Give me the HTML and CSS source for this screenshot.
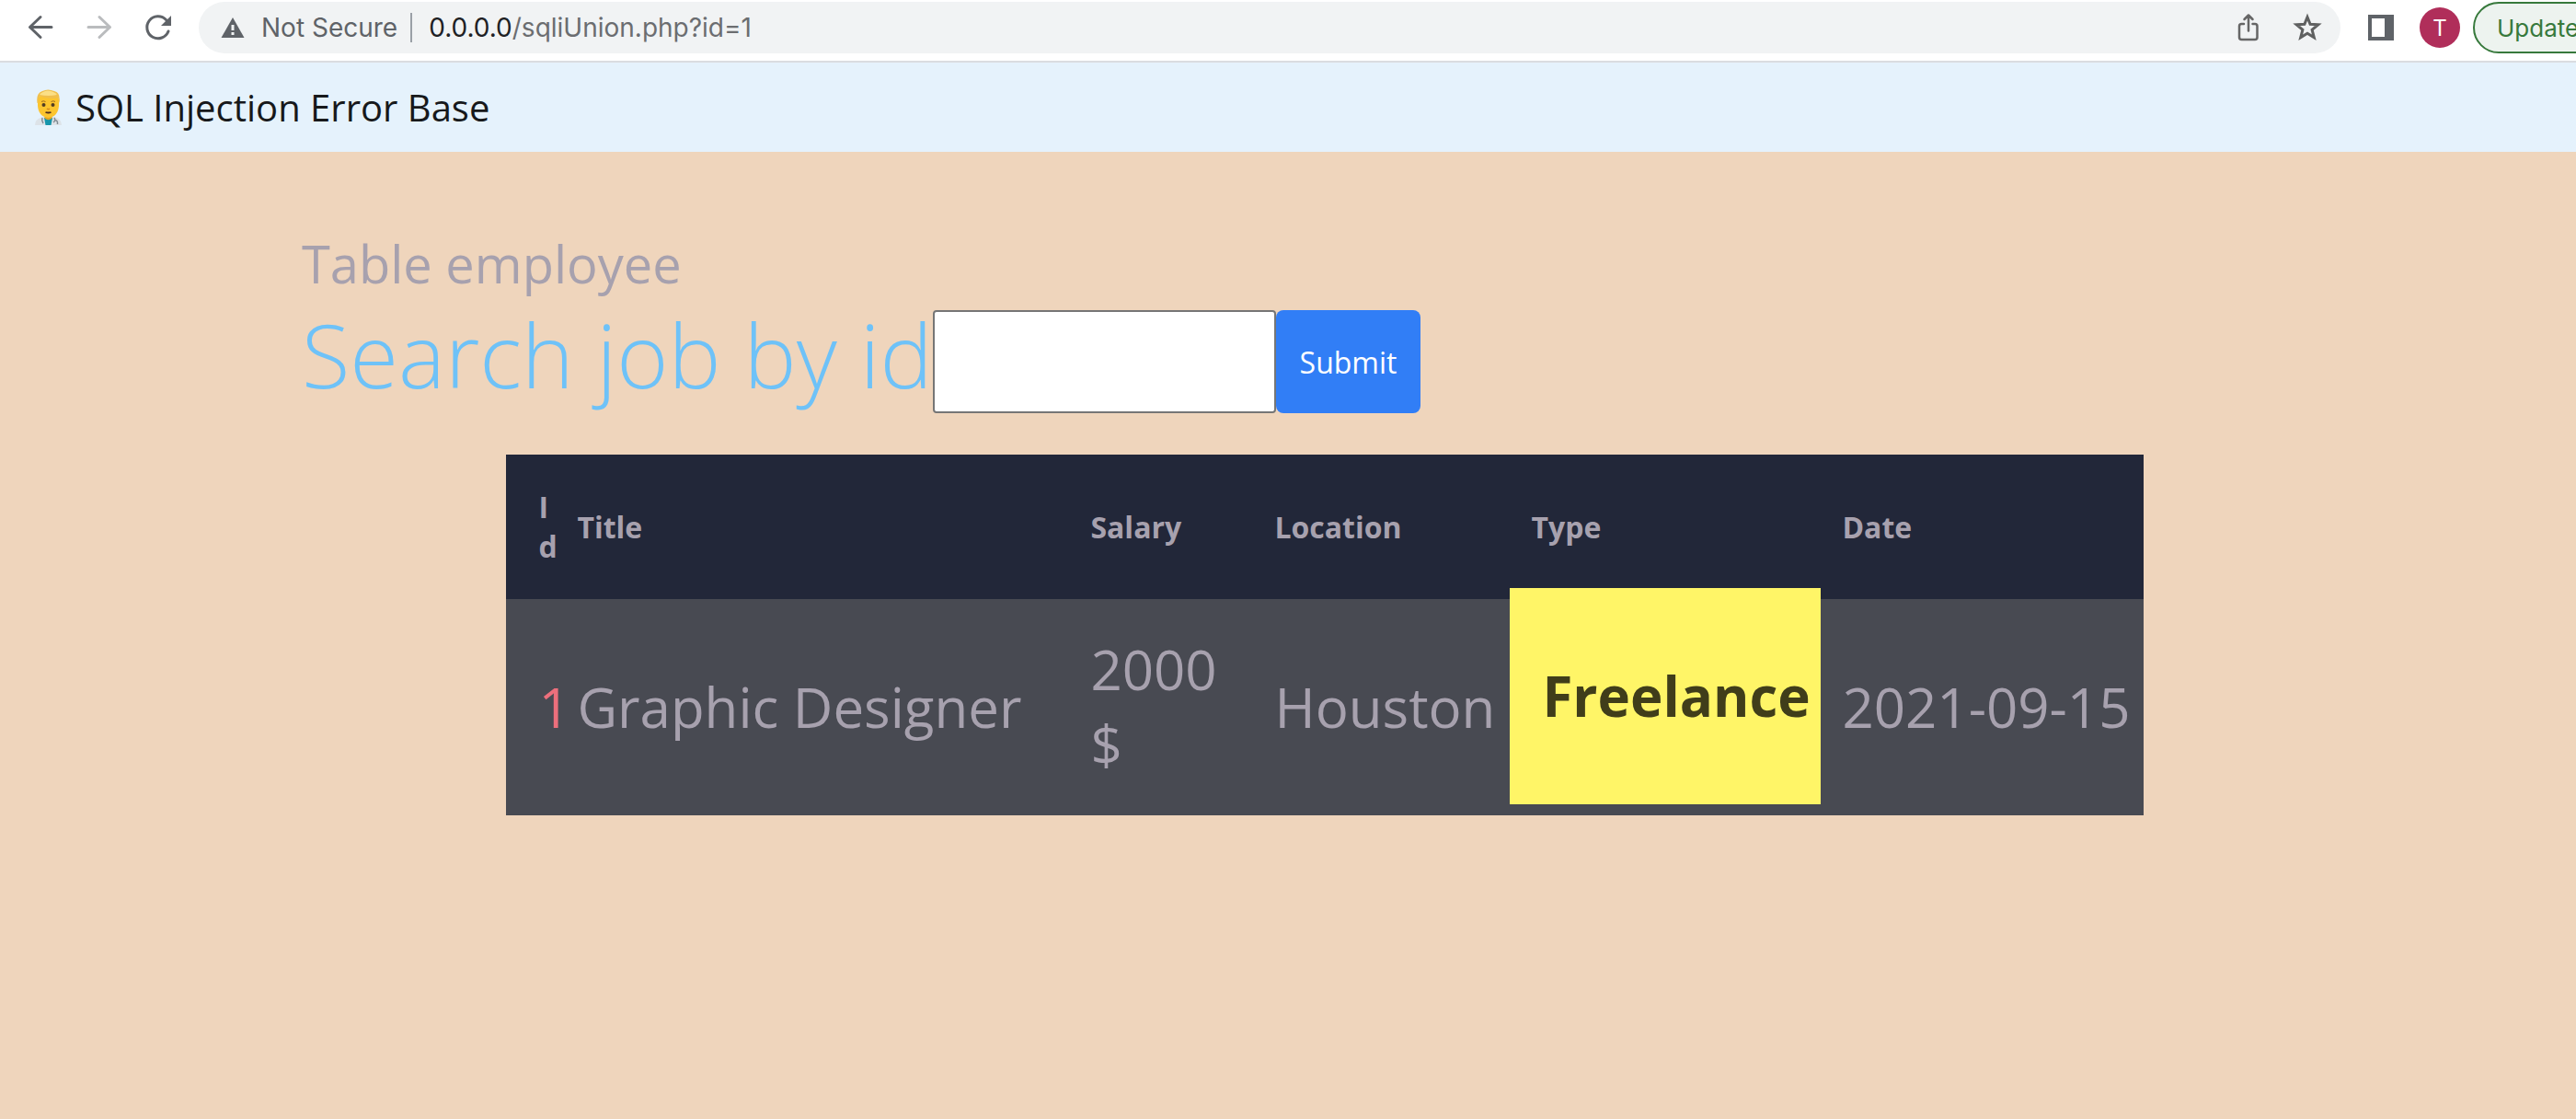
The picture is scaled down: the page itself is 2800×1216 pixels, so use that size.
FILE: index.html
```html
<!DOCTYPE html>
<html lang="en">
<head>
<meta charset="utf-8">
<title>SQL Injection Error Base</title>
<link rel="stylesheet" href="styles.css">
</head>
<body>
<div class="toolbar">
  <div class="nav-buttons">
    <button type="button" class="icon-button" aria-label="Back">
      <svg width="32" height="32" viewBox="0 0 32 32" fill="none" stroke="#5f6368" stroke-width="3" stroke-linecap="round" stroke-linejoin="round"><path d="M28 15.500H4.500M16 4.500L4.500 15.500L16 26.500"/></svg>
    </button>
    <button type="button" class="icon-button" aria-label="Forward">
      <svg width="32" height="32" viewBox="0 0 32 32" fill="none" stroke="#babcbe" stroke-width="3" stroke-linecap="round" stroke-linejoin="round"><path d="M4 15.500H27.500M16 4.500L27.500 15.500L16 26.500"/></svg>
    </button>
    <button type="button" class="icon-button" aria-label="Reload">
      <svg width="32" height="32" viewBox="0 0 32 32"><path d="M27 20A12 12 0 1 1 24.500 7.500" fill="none" stroke="#5f6368" stroke-width="3" stroke-linecap="round"/><path d="M30 3V14H19Z" fill="#5f6368"/></svg>
    </button>
  </div>
  <div class="address">
    <svg width="26" height="24" viewBox="0 0 26 24"><path d="M13 1L25.500 23H.500Z" fill="#5f6368"/><path d="M11.500 9h3v6h-3zM11.500 17h3v3h-3z" fill="#f1f3f4"/></svg>
    <span class="security">Not Secure</span>
    <span class="url" role="textbox" aria-label="Address"><span class="host">0.0.0.0</span>/sqliUnion.php?id=1</span>
    <button type="button" class="icon-button" aria-label="Share">
      <svg width="32" height="32" viewBox="0 0 32 32" fill="none" stroke="#666" stroke-width="2.500" stroke-linecap="round" stroke-linejoin="round"><path d="M11 12H8.500Q6 12 6 14.500V26.500Q6 29 8.500 29H23Q25.500 29 25.500 26.500V14.500Q25.500 12 23 12H20.500M16 19.500V3M11.500 7L16 2.500L20.500 7"/></svg>
    </button>
    <button type="button" class="icon-button" aria-label="Bookmark">
      <svg width="32" height="32" viewBox="0 0 32 32"><path d="M16 4.500L19.100 12.300L27.800 12.800L21.100 18.300L23.300 26.800L16 22.200L8.700 26.800L10.900 18.300L4.200 12.800L12.900 12.300Z" fill="none" stroke="#5f6060" stroke-width="3"/></svg>
    </button>
  </div>
  <button type="button" class="icon-button" aria-label="Side panel">
    <svg width="32" height="32" viewBox="0 0 32 32"><path d="M2 2H30V30H2ZM6 6V26H20V6Z" fill="#5f6368" fill-rule="evenodd"/></svg>
  </button>
  <button type="button" class="avatar" aria-label="Profile">T</button>
  <button type="button" class="update">Update</button>
</div>

<nav class="navbar">
  <a class="brand" href="#">
    <svg width="31" height="40" viewBox="0 0 31 40" aria-hidden="true">
      <path d="M1 39Q1 33 7 31L12 29H19L24 31Q30 33 30 39Z" fill="#dde3e8"/>
      <path d="M11 31H20L18.500 39H12.500Z" fill="#1695aa"/>
      <path d="M11.500 27H19.500V31.500Q15.500 35 11.500 31.500Z" fill="#e5a523"/>
      <path d="M4 11Q5 5 15.500 4Q26 5 27 11V18Q26 30 15.500 31Q5 30 4 18Z" fill="#fcc52f"/>
      <path d="M3.500 15Q2 4 9 2Q15-1 22 2Q29 3 27.500 15L26 9.500Q15 11 6 7.500Q5 10 4.500 15Z" fill="#f0bf4c"/>
      <path d="M6 6Q9 2 15 1.500Q22 2 25 6Q16 8 6 6Z" fill="#fbdf86"/>
      <circle cx="10.500" cy="17" r="2" fill="#523d24"/><circle cx="20.500" cy="17" r="2" fill="#523d24"/>
      <path d="M8 13.500Q10 12 12.500 13.500M18.500 13.500Q21 12 23 13.500" fill="none" stroke="#a06e20"/>
      <path d="M14 21Q15.500 22.500 17 21" fill="none" stroke="#d58c20" stroke-width="1.500"/>
      <path d="M12.500 25Q15.500 26 18.500 25" fill="none" stroke="#4c2c20" stroke-width="1.800"/>
      <path d="M9 31Q8 34 10 37M22 31Q24 34 21 36M22 34Q26 33 25.500 38" fill="none" stroke="#818b92" stroke-width="1.500"/>
    </svg>
    <span>SQL Injection Error Base</span>
  </a>
</nav>

<main class="content">
  <h2 class="heading">Table employee</h2>
  <form class="search" onsubmit="return false">
    <label class="search-label" for="job-id">Search job by id</label>
    <input class="search-input" id="job-id" name="id" type="text">
    <button class="submit" type="submit">Submit</button>
  </form>
  <table class="jobs">
    <colgroup>
      <col class="col-id"><col class="col-title"><col class="col-salary"><col class="col-location"><col class="col-type"><col>
    </colgroup>
    <thead>
      <tr><th scope="col">Id</th><th scope="col">Title</th><th scope="col">Salary</th><th scope="col">Location</th><th scope="col">Type</th><th scope="col">Date</th></tr>
    </thead>
    <tbody>
      <tr><td class="job-id">1</td><td>Graphic Designer</td><td>2000 $</td><td>Houston</td><td class="highlight">Freelance</td><td>2021-09-15</td></tr>
    </tbody>
  </table>
</main>
</body>
</html>
```
FILE: styles.css
```css
* { box-sizing: border-box; }

body {
  margin: 0;
  min-height: 100vh;
  background: #efd5bc;
  color: #a7a1ae;
  font-family: "Open Sans", sans-serif;
}

button {
  margin: 0;
  padding: 0;
  border: 0;
  background: none;
  font-family: inherit;
}

svg { display: block; flex: none; }

/* Browser toolbar */
.toolbar {
  display: flex;
  align-items: center;
  overflow: hidden;
  height: 68px;
  padding: 2px 0 8px 28px;
  border-bottom: 2px solid #dadce0;
  background: #fff;
  color: #5f6368;
  font-family: Inter, sans-serif;
  font-size: 28px;
}

.nav-buttons {
  display: flex;
  gap: 32px;
  margin-right: 28px;
}

.icon-button { flex: none; }

.address {
  display: flex;
  flex: 1;
  align-items: center;
  height: 56px;
  margin-right: 28px;
  padding: 0 20px 0 24px;
  border-radius: 28px;
  background: #f1f3f4;
}

.address .icon-button + .icon-button { margin-left: 32px; }

.security {
  margin-left: 18px;
  padding-right: 14px;
  border-right: 2px solid #9aa0a6;
  line-height: 32px;
}

.url {
  flex: 1;
  padding-left: 18px;
  color: #6b6d70;
}

.host { color: #202124; }

.avatar {
  flex: none;
  width: 44px;
  height: 44px;
  margin: 0 14px 0 26px;
  border-radius: 50%;
  background: #b02e5a;
  color: #fff;
  font-size: 24px;
}

.update {
  flex: none;
  width: 160px;
  height: 56px;
  margin-right: -48px;
  padding-left: 24px;
  border: 2px solid #37793c;
  border-radius: 28px;
  background: #edf3ef;
  color: #37793c;
  font-size: 26px;
  text-align: left;
}

/* Page header */
.navbar {
  display: flex;
  align-items: center;
  height: 97px;
  padding: 0 37px;
  background: #e5f2fc;
}

.brand {
  display: flex;
  align-items: center;
  gap: 14px;
  color: #17191b;
  font-size: 40px;
  text-decoration: none;
}

/* Search and results */
.content { padding: 86px 248px 48px 328px; }

.heading {
  margin: 0;
  font-size: 56px;
  font-weight: 400;
  line-height: 70px;
}

.search {
  display: flex;
  align-items: flex-end;
  margin-bottom: 45px;
}

.search-label {
  color: #6ec2f8;
  font-size: 96px;
  font-weight: 300;
  line-height: 128px;
}

.search-input {
  width: 373px;
  height: 112px;
  padding: 0 16px;
  border: 2px solid #767676;
  border-radius: 4px;
  background: #fff;
  font: inherit;
  font-size: 32px;
}

.submit {
  height: 112px;
  padding: 0 26px;
  border-radius: 8px;
  background: #317ef6;
  color: #fff;
  font-size: 32px;
}

.jobs {
  width: 80%;
  margin: 0 auto;
  border-spacing: 0;
  table-layout: fixed;
  background: #484a52;
}

.col-id { width: 42px; }
.col-title { width: 558px; }
.col-salary { width: 200px; }
.col-location { width: 279px; }
.col-type { width: 338px; }

.jobs th,
.jobs td {
  padding: 35px 0 36px 35px;
  text-align: left;
}

.jobs th {
  background: #222739;
  font-size: 32px;
  line-height: 43px;
  overflow-wrap: anywhere;
}

.jobs td {
  font-size: 60px;
  line-height: 82px;
}

.jobs .job-id { color: #ec6f7c; }

/* The job type is lifted out of its row */
.jobs .highlight {
  position: relative;
  top: -12px;
  left: 12px;
  background: #fff567;
  color: #403d1a;
  font-weight: 700;
}
```
